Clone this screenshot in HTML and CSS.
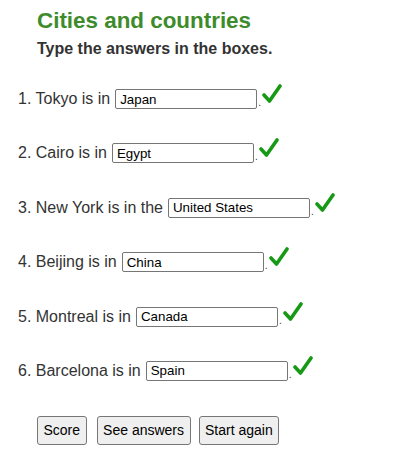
FILE: index.html
```html
<!DOCTYPE html>
<html>
<head>
<meta charset="utf-8">
<link rel="stylesheet" href="styles.css">
</head>
<body>
<div class="page">
  <h1 class="title">Cities and countries</h1>
  <p class="subtitle">Type the answers in the boxes.</p>
  <div class="questions">
    <div class="row"><span class="q">1. Tokyo is in</span><input class="answer" type="text" value="Japan"><span class="dot">.</span><svg class="tick" viewBox="0 0 20 20"><path d="M2 11 L7.5 17 L18 2" /></svg></div>
    <div class="row"><span class="q">2. Cairo is in</span><input class="answer" type="text" value="Egypt"><span class="dot">.</span><svg class="tick" viewBox="0 0 20 20"><path d="M2 11 L7.5 17 L18 2" /></svg></div>
    <div class="row"><span class="q">3. New York is in the</span><input class="answer" type="text" value="United States"><span class="dot">.</span><svg class="tick" viewBox="0 0 20 20"><path d="M2 11 L7.5 17 L18 2" /></svg></div>
    <div class="row"><span class="q">4. Beijing is in</span><input class="answer" type="text" value="China"><span class="dot">.</span><svg class="tick" viewBox="0 0 20 20"><path d="M2 11 L7.5 17 L18 2" /></svg></div>
    <div class="row"><span class="q">5. Montreal is in</span><input class="answer" type="text" value="Canada"><span class="dot">.</span><svg class="tick" viewBox="0 0 20 20"><path d="M2 11 L7.5 17 L18 2" /></svg></div>
    <div class="row"><span class="q">6. Barcelona is in</span><input class="answer" type="text" value="Spain"><span class="dot">.</span><svg class="tick" viewBox="0 0 20 20"><path d="M2 11 L7.5 17 L18 2" /></svg></div>
  </div>
  <div class="buttons">
    <button class="btn">Score</button>
    <button class="btn">See answers</button>
    <button class="btn">Start again</button>
  </div>
</div>
</body>
</html>
```

FILE: styles.css
```css
html, body {
  margin: 0;
  padding: 0;
  background: #ffffff;
}
body {
  font-family: Arial, "Liberation Sans", sans-serif;
  color: #333333;
}
.page {
  padding: 8px 0 0 0;
}
.title {
  margin: 0 0 0 37px;
  font-size: 22.4px;
  font-weight: bold;
  color: #3d8b2b;
  line-height: 26px;
}
.subtitle {
  margin: 5px 0 0 37px;
  font-size: 16px;
  font-weight: bold;
  color: #333333;
  line-height: 20px;
}
.questions {
  display: flex;
  flex-direction: column;
  gap: 34.4px;
  margin-top: 30px;
  padding-left: 18px;
}
.row {
  display: flex;
  align-items: center;
  height: 20px;
  font-size: 16px;
}
.q {
  margin-right: 5px;
  white-space: nowrap;
}
.answer {
  box-sizing: border-box;
  width: 142px;
  height: 20px;
  margin: 0;
  padding: 0 4px;
  border: 1px solid #767676;
  border-radius: 2px;
  font-family: Arial, "Liberation Sans", sans-serif;
  font-size: 13.33px;
  color: #000000;
  background: #ffffff;
}
.dot {
  font-size: 10px;
  align-self: flex-end;
  line-height: 12px;
  margin-left: 1px;
}
.tick {
  width: 20px;
  height: 20px;
  margin-left: 1px;
  margin-top: -10px;
  fill: none;
  stroke: #169a16;
  stroke-width: 3.6;
  stroke-linecap: round;
  stroke-linejoin: round;
}
.buttons {
  display: flex;
  margin: 35px 0 0 37px;
}
.btn {
  box-sizing: border-box;
  height: 29px;
  padding: 0 5.5px;
  font-family: Arial, "Liberation Sans", sans-serif;
  font-size: 14px;
  color: #000000;
  background: #efefef;
  border: 1px solid #767676;
  border-radius: 3px;
}
.btn:nth-child(2) {
  margin-left: 10px;
}
.btn:nth-child(3) {
  margin-left: 8px;
}
```
